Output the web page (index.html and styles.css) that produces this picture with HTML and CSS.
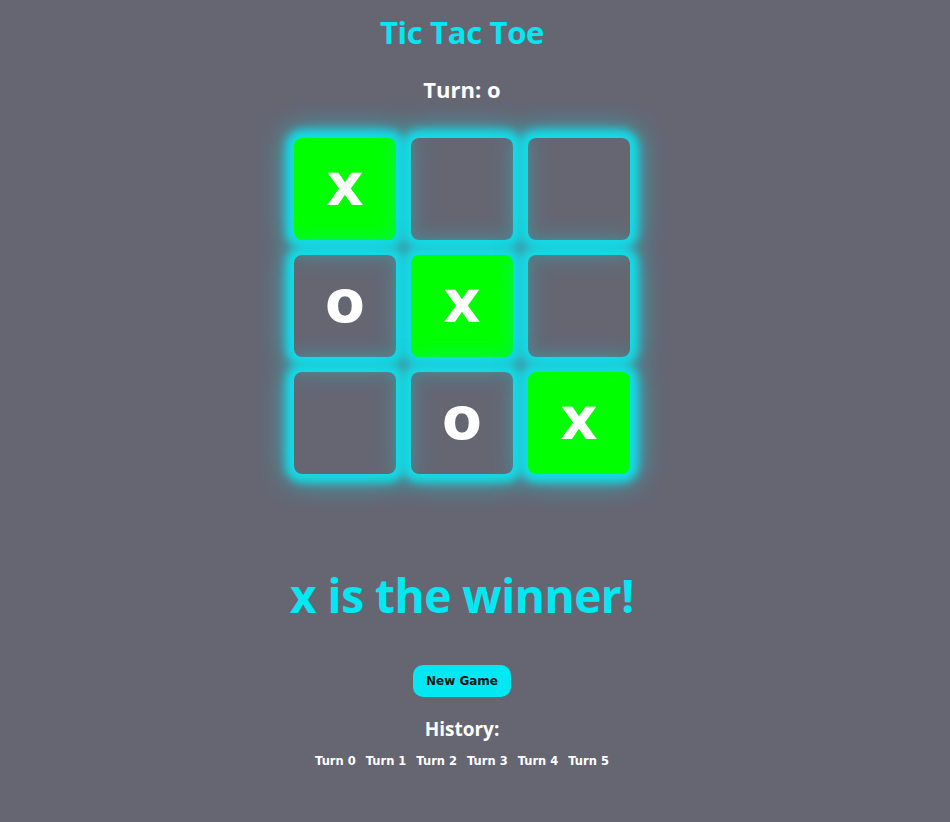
FILE: index.html
```html
<!DOCTYPE html>
<html>
<head>
<meta charset="utf-8">
<link rel="stylesheet" href="styles.css">
</head>
<body>
<main class="app">
  <h1 class="title">Tic Tac Toe</h1>
  <h2 class="turn">Turn: o</h2>
  <div class="board">
    <div class="cell win">x</div>
    <div class="cell"></div>
    <div class="cell"></div>
    <div class="cell">o</div>
    <div class="cell win">x</div>
    <div class="cell"></div>
    <div class="cell"></div>
    <div class="cell">o</div>
    <div class="cell win">x</div>
  </div>
  <p class="winner">x is the winner!</p>
  <button class="new-game">New Game</button>
  <h3 class="history-title">History:</h3>
  <div class="history">
    <button class="hist-btn">Turn 0</button>
    <button class="hist-btn">Turn 1</button>
    <button class="hist-btn">Turn 2</button>
    <button class="hist-btn">Turn 3</button>
    <button class="hist-btn">Turn 4</button>
    <button class="hist-btn">Turn 5</button>
  </div>
</main>
</body>
</html>
```

FILE: styles.css
```css
html, body {
  margin: 0;
  padding: 0;
  background: #666673;
  height: 100%;
}
body {
  font-family: "Open Sans", "Noto Sans", sans-serif;
  color: #ffffff;
}
.app {
  width: 924px;
  display: flex;
  flex-direction: column;
  align-items: center;
}
.title {
  margin: 12px 0 0;
  font-size: 31px;
  font-weight: 700;
  line-height: 40px;
  color: #00e8f2;
  letter-spacing: -0.3px;
}
.turn {
  margin: 23px 0 0;
  font-size: 22px;
  font-weight: 700;
  line-height: 28px;
}
.board {
  margin-top: 35px;
  display: grid;
  grid-template-columns: repeat(3, 102px);
  grid-auto-rows: 102px;
  gap: 15px;
}
.cell {
  border-radius: 8px;
  box-shadow: 0 0 8px 8px #14dbe6, 0 0 26px 8px rgba(20, 219, 230, 0.7);
  display: flex;
  align-items: center;
  justify-content: center;
  font-family: "DejaVu Sans", Verdana, sans-serif;
  font-weight: 700;
  font-size: 58px;
  line-height: 1;
  padding-bottom: 8px;
  box-sizing: border-box;
}
.cell.win {
  background: #00ff00;
}
.winner {
  margin: 90px 0 0;
  font-size: 46px;
  font-weight: 700;
  line-height: 62px;
  color: #00e8f2;
  letter-spacing: -0.5px;
}
.new-game {
  margin-top: 39px;
  width: 98px;
  height: 32px;
  border: none;
  border-radius: 10px;
  background: #00e8f2;
  color: #111111;
  font-family: "DejaVu Sans", Verdana, sans-serif;
  font-weight: 700;
  font-size: 12px;
  padding: 0;
}
.history-title {
  margin: 19px 0 0;
  font-size: 19px;
  font-weight: 700;
  line-height: 26px;
}
.history {
  margin-top: 12px;
  display: flex;
  gap: 10px;
}
.hist-btn {
  border: none;
  background: transparent;
  color: #ffffff;
  font-family: "DejaVu Sans", Verdana, sans-serif;
  font-weight: 700;
  font-size: 11.5px;
  padding: 0;
}
```
